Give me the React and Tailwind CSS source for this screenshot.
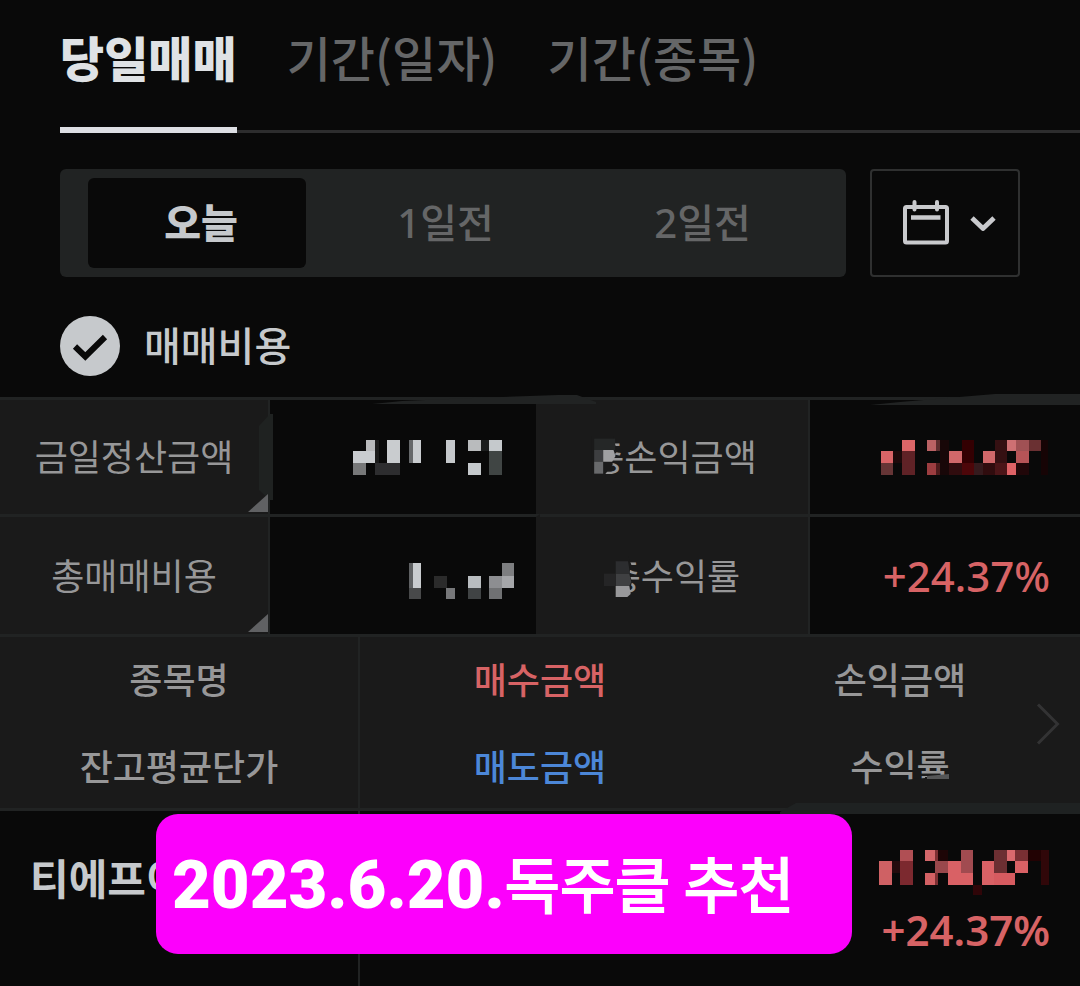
import { useState } from "react";

const SETTLEMENT = [
  [77, 178, 27, 34, "#b9babc"], [39, 212, 65, 35, "#c9cccf"], [39, 247, 38, 36, "#777879"],
  [104, 178, 12, 69, "#1c1c1c"], [104, 247, 76, 36, "#2d2d2f"], [140, 178, 40, 69, "#c9cccf"],
  [206, 178, 12, 69, "#66686a"], [218, 178, 25, 69, "#c9cccf"], [319, 178, 26, 69, "#c5c8cb"],
  [383, 178, 40, 34, "#b9bbbd"], [423, 178, 23, 34, "#1a1c1c"], [446, 178, 41, 34, "#c5c9cc"],
  [383, 247, 40, 36, "#c5c9cc"], [446, 212, 41, 71, "#404544"],
];

const COST = [
  [206, 550, 12, 74, "#5f6163"], [218, 550, 25, 74, "#c9cccf"], [206, 624, 37, 33, "#48494a"],
  [281, 587, 39, 37, "#2b2b2b"], [319, 624, 26, 33, "#77787a"], [383, 587, 40, 37, "#b9bdc0"],
  [383, 624, 40, 33, "#404344"], [446, 587, 40, 37, "#8d8e91"], [446, 624, 40, 33, "#707173"],
  [485, 550, 37, 37, "#7d7e80"], [485, 587, 37, 37, "#a5a6a9"],
];

const PROFIT = [
  [540, 212, 38, 36, "#d96467"], [540, 248, 38, 36, "#663536"], [578, 212, 26, 36, "#1c090a"],
  [604, 178, 39, 34, "#db6668"], [604, 212, 39, 72, "#5f2226"], [679, 178, 29, 34, "#ba6264"],
  [708, 178, 11, 34, "#5c2d2e"], [679, 248, 29, 36, "#9c3d40"], [708, 248, 11, 36, "#4d1b1c"],
  [719, 178, 27, 106, "#180708"], [746, 212, 39, 36, "#d0686a"], [746, 248, 39, 36, "#300c0e"],
  [785, 178, 37, 70, "#330002"], [785, 248, 37, 36, "#4d0609"], [822, 248, 26, 36, "#351a1d"],
  [848, 212, 37, 36, "#d0686a"], [848, 248, 37, 36, "#300c0e"], [885, 178, 38, 70, "#351012"],
  [885, 248, 38, 36, "#4c1518"], [923, 178, 25, 34, "#ce7073"], [923, 248, 25, 36, "#df6266"],
  [948, 178, 40, 34, "#a05154"], [948, 212, 40, 36, "#b65457"], [948, 248, 40, 36, "#210709"],
  [988, 178, 37, 34, "#6a3032"], [1025, 178, 22, 106, "#160405"],
];

const HOLDING_PROFIT = [
  [477, 693, 38, 73, "#cf6164"], [515, 693, 26, 36, "#240b0d"], [541, 660, 39, 33, "#b04f54"],
  [541, 693, 39, 73, "#7c292f"], [615, 660, 29, 33, "#d3676a"], [644, 660, 11, 33, "#7d3033"],
  [655, 660, 28, 33, "#1d0506"], [644, 693, 39, 36, "#99484c"], [615, 729, 29, 37, "#d36164"],
  [644, 729, 11, 37, "#7d3033"], [683, 693, 39, 73, "#d96165"], [722, 660, 37, 69, "#a14b50"],
  [722, 729, 37, 37, "#d96165"], [759, 766, 26, 30, "#2f0508"], [785, 693, 37, 73, "#d96165"],
  [822, 660, 38, 69, "#6c2f32"], [822, 729, 62, 37, "#d65b60"], [860, 660, 25, 33, "#d9696d"],
  [885, 660, 38, 33, "#792f33"], [885, 693, 38, 36, "#d96165"], [923, 660, 39, 33, "#220203"],
  [962, 660, 26, 106, "#300709"],
];

function Mosaic({ cells, viewBox, className }) {
  return (
    <svg viewBox={viewBox} className={className} shapeRendering="crispEdges" aria-hidden="true">
      {cells.map(([x, y, w, h, fill], i) => (
        <rect key={i} x={x} y={y} width={w} height={h} fill={fill} />
      ))}
    </svg>
  );
}

function Corner() {
  return (
    <svg viewBox="0 0 20 18" className="absolute right-0 bottom-[2px] h-[18px] w-5" aria-hidden="true">
      <path d="M20 0V18H0Z" fill="#606163" />
    </svg>
  );
}

const label = "relative border-r-2 border-[#212323] bg-[#1a1a1a] pb-1 text-center font-normal text-[#979798]";

export default function App() {
  const [tab, setTab] = useState(0);
  const [day, setDay] = useState(0);
  const [cost, setCost] = useState(true);

  return (
    <main className="min-h-screen overflow-hidden bg-[#090909] font-['Noto_Sans_CJK_KR',sans-serif] text-[#c6c9cc]">
      <nav className="ml-[60px] flex gap-[50px] border-b-[3px] border-[#2d2d2e] pt-4">
        {["당일매매", "기간(일자)", "기간(종목)"].map((name, i) => (
          <button
            key={name}
            type="button"
            onClick={() => setTab(i)}
            className={
              tab === i
                ? "-mb-[3px] border-b-6 border-[#dddfe4] pb-[31px] text-[48px] leading-[80px] font-black whitespace-nowrap text-[#dfe2e5]"
                : "-mb-[3px] border-b-6 border-transparent pb-[31px] text-[48px] leading-[80px] font-medium whitespace-nowrap text-[#656667]"
            }
          >
            {name}
          </button>
        ))}
      </nav>

      <div className="mt-9 flex gap-6 px-[60px]">
        <div className="flex h-[108px] flex-1 rounded-md bg-[#212323] py-[9px] pr-[15px] pl-7 font-['Noto_Sans','Noto_Sans_CJK_KR',sans-serif]">
          {["오늘", "1일전", "2일전"].map((name, i) => (
            <button
              key={name}
              type="button"
              onClick={() => setDay(i)}
              className={
                day === i
                  ? "mr-[11px] flex-[210] rounded-md bg-[#090909] pl-2 text-[40px] leading-[60px] font-black"
                  : "flex-[257] rounded-md text-[40px] leading-[60px] font-medium text-[#656667]"
              }
            >
              {name}
            </button>
          ))}
        </div>
        <button
          type="button"
          aria-label="날짜 선택"
          className="flex h-[108px] w-[150px] items-center justify-center gap-[21px] rounded-sm border-2 border-[#2f3030] pl-2 text-[#c9cacd]"
        >
          <svg viewBox="0 0 46 46" className="h-[46px] w-[46px]" fill="none" stroke="currentColor" aria-hidden="true">
            <rect x="2" y="7" width="42" height="35.500" rx="1.500" strokeWidth="4" />
            <path d="M11.500 2V9.500M34 2V9.500" strokeWidth="4" strokeLinecap="round" />
            <path d="M8 17.500H37.500" strokeWidth="4.500" />
          </svg>
          <svg viewBox="0 0 26 16" className="h-4 w-[26px]" fill="none" stroke="currentColor" aria-hidden="true">
            <path d="M2 3L13 13.500L24 3" strokeWidth="4.800" strokeLinejoin="round" />
          </svg>
        </button>
      </div>

      <div className="mt-[39px] flex px-[60px]">
        <label className="flex items-start gap-6 text-[40px] leading-[56px] font-medium">
          <span className="relative block h-[60px] w-[60px]">
            <input
              type="checkbox"
              checked={cost}
              onChange={(e) => setCost(e.target.checked)}
              className="block h-[60px] w-[60px] appearance-none rounded-full bg-[#45474a] checked:bg-[#c6c9cc]"
            />
            <svg viewBox="0 0 60 60" className="pointer-events-none absolute inset-0" fill="none" aria-hidden="true">
              <path d="M15 30.500L25.300 40.500L45 21" stroke="#090909" strokeWidth="6" />
            </svg>
          </span>
          매매비용
        </label>
      </div>

      <table className="mt-[21px] w-full table-fixed border-separate border-spacing-0 text-[36px] leading-[60px]">
        <tbody>
          <tr className="h-[117px] [&>*]:border-t-3 [&>*]:border-t-[#212323]">
            <th scope="row" className={label}>
              금일정산금액
              <svg viewBox="0 0 14 86" className="absolute top-[14px] -right-[5px] z-10 h-[86px] w-[14px]" aria-hidden="true">
                <path d="M0 12L11 0H14V86H11L0 76Z" fill="#1f2221" />
              </svg>
              <span className="absolute right-0 bottom-0 z-10 block h-5 w-5">
                <Corner />
              </span>
            </th>
            <td className="relative border-r-4 border-[#1a1a1a] pr-[22px]">
              <svg viewBox="0 0 224 12" className="absolute -top-[6px] left-[102px] z-10 h-3 w-[224px]" aria-hidden="true">
                <path d="M0 10L30 7L100 4L186 1L205 1L224 8V10Z" fill="#212323" />
              </svg>
              <Mosaic cells={SETTLEMENT} viewBox="39 178 483 105" className="ml-auto h-[35px] w-[161px]" />
            </td>
            <th scope="row" className={label}>
              <span className="relative inline-block">
                총손익금액
                <svg viewBox="755 170 80 123" className="absolute top-[11px] left-0 h-[41px] w-[27px]" aria-hidden="true">
                  <path d="M755 170H822L826 195L835 215L815 235L820 255L797 285V293H755Z" fill="#1a1a1a" />
                  <path d="M764 178H827V212H764Z" fill="#252727" />
                  <path d="M764 212H791V247H764Z" fill="#3d3e40" />
                  <path d="M791 212H822L828 230L818 247H791Z" fill="#a0a0a2" />
                  <path d="M764 247H791V283H764Z" fill="#68696b" />
                </svg>
              </span>
            </th>
            <td className="relative pr-[30px]">
              <svg viewBox="0 0 210 12" className="absolute -top-[7px] right-0 h-3 w-[210px]" aria-hidden="true">
                <path d="M0 12L30 9L125 1H210V12Z" fill="#212323" />
              </svg>
              <Mosaic cells={PROFIT} viewBox="540 178 510 106" className="ml-auto h-[35px] w-[170px]" />
            </td>
          </tr>
          <tr className="h-[120px] [&>*]:border-t-3 [&>*]:border-t-[#212323]">
            <th scope="row" className={label}>
              총매매비용
              <Corner />
            </th>
            <td className="relative border-r-4 border-[#1a1a1a] pr-[22px]">
              <Mosaic cells={COST} viewBox="204 513 318 147" className="ml-auto h-[49px] w-[106px]" />
            </td>
            <th scope="row" className={label}>
              <span className="relative inline-block">
                총수익률
                <svg viewBox="792 534 84 132" className="absolute top-[12px] -left-1 h-[44px] w-7" aria-hidden="true">
                  <path d="M792 534H864L874 560L868 585L876 612L868 640L850 666H792Z" fill="#1a1a1a" />
                  <path d="M827 550H864L870 587H827Z" fill="#2c2d2f" />
                  <path d="M827 587H868L874 612L868 624H827Z" fill="#3f4042" />
                  <path d="M792 587H827V624H792Z" fill="#252526" />
                  <path d="M827 624H868L872 648L862 657H827Z" fill="#98989a" />
                </svg>
              </span>
            </th>
            <td className="pr-[30px] text-right font-['Noto_Sans',sans-serif] text-[42px] font-medium text-[#d76365]">+24.37%</td>
          </tr>
        </tbody>
      </table>

      <div className="relative">
        <table className="w-full table-fixed border-separate border-spacing-0 text-[36px] leading-[60px]">
          <thead>
            <tr className="bg-[#1a1a1a] text-[#979798] [&>*]:border-y-3 [&>*]:border-[#212323] [&>*]:pt-[11px] [&>*]:pb-[13px] [&>*]:font-medium">
              <th scope="col" className="border-r-2">
                <div>종목명</div>
                <div className="mt-[27px]">잔고평균단가</div>
              </th>
              <th scope="col">
                <div className="text-[#d76365]">매수금액</div>
                <div className="mt-[27px] text-[#4c87d8]">매도금액</div>
              </th>
              <th scope="col" className="relative">
                <div>손익금액</div>
                <div className="mt-[27px]">수익률</div>
                <svg viewBox="0 0 60 14" className="absolute right-[129px] bottom-[22px] h-[14px] w-[60px]" aria-hidden="true">
                  <path d="M12 8L34 6V5H60V14H12Z" fill="#1a1a1a" />
                  <path d="M36 4L58 2V7H36Z" fill="#555657" />
                </svg>
                <button type="button" aria-label="다음 항목" className="absolute top-[66px] right-5">
                  <svg viewBox="0 0 24 42" className="h-[42px] w-6" fill="none" aria-hidden="true">
                    <path d="M2 1.500L21.500 21L2 40.500" stroke="#333334" strokeWidth="3" />
                  </svg>
                </button>
                <svg viewBox="0 0 300 12" className="absolute right-0 -bottom-[6px] h-3 w-[300px]" aria-hidden="true">
                  <path d="M0 10L16 1H300V12H0Z" fill="#1f2222" />
                </svg>
              </th>
            </tr>
          </thead>
          <tbody>
            <tr className="h-[175px] align-top">
              <td className="border-r-2 border-[#212323] pt-9 pl-[30px] text-[42px] font-bold whitespace-nowrap">
                티에프이
              </td>
              <td />
              <td className="pt-[39px] pr-[30px] text-right font-['Noto_Sans',sans-serif] text-[42px] font-semibold text-[#d76365]">
                <Mosaic cells={HOLDING_PROFIT} viewBox="477 660 513 135" className="mb-[5px] ml-auto h-[45px] w-[171px]" />
                +24.37%
              </td>
            </tr>
          </tbody>
        </table>
        <div className="absolute bottom-8 left-[156px] flex h-[140px] w-[696px] items-baseline rounded-[22px] bg-[#fc00fc] pl-4 leading-[136px] whitespace-nowrap text-white">
          <span className="font-['Roboto',sans-serif] text-[67px] font-black">2023.6.20.</span>
          <span className="text-[60px] font-normal [-webkit-text-stroke:2px_white] [stroke-linejoin:round]">독주클 추천</span>
        </div>
      </div>
    </main>
  );
}
